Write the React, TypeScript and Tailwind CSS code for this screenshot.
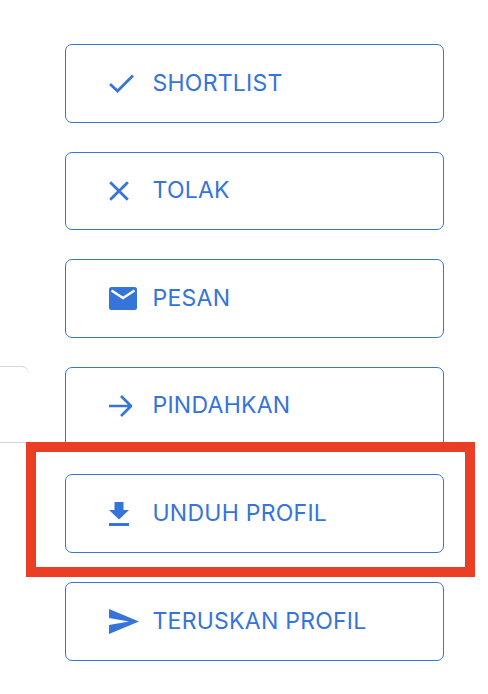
import { ReactNode } from "react";

const blue = "#3574d9";

const CheckIcon = () => (
  <svg width="25" height="19" viewBox="0 0 25 19" fill="none" stroke={blue} strokeWidth="2.7">
    <path d="M1 10 L8.5 17 L24 1.5" />
  </svg>
);

const CloseIcon = () => (
  <svg width="20" height="20" viewBox="0 0 20 20" fill="none" stroke={blue} strokeWidth="2.8">
    <path d="M1.2 1.2 L18.8 18.8 M18.8 1.2 L1.2 18.8" />
  </svg>
);

const MailIcon = () => (
  <svg width="28" height="23" viewBox="0 0 28 23">
    <rect width="28" height="23" rx="2.5" fill={blue} />
    <path d="M2.5 3.5 L14 11 L25.5 3.5" fill="none" stroke="#fff" strokeWidth="2.4" />
  </svg>
);

const ArrowIcon = () => (
  <svg width="23" height="22" viewBox="0 0 23 22" fill="none" stroke={blue} strokeWidth="2.7">
    <path d="M0 11 H21 M12 1 L22 11 L12 21" />
  </svg>
);

const DownloadIcon = () => (
  <svg width="20" height="24" viewBox="0 0 20 24" fill={blue}>
    <path d="M5.5 0 H14.5 V8 H20 L10 17.5 L0 8 H5.5 Z" />
    <rect y="21" width="20" height="3" />
  </svg>
);

const SendIcon = () => (
  <svg width="30" height="25" viewBox="0 0 30 25" fill={blue}>
    <path d="M0 0 L30 12.5 L0 25 L0 16 L20 12.5 L0 9 Z" />
  </svg>
);

const actions: { label: string; icon: ReactNode }[] = [
  { label: "SHORTLIST", icon: <CheckIcon /> },
  { label: "TOLAK", icon: <CloseIcon /> },
  { label: "PESAN", icon: <MailIcon /> },
  { label: "PINDAHKAN", icon: <ArrowIcon /> },
  { label: "UNDUH PROFIL", icon: <DownloadIcon /> },
  { label: "TERUSKAN PROFIL", icon: <SendIcon /> },
];

export default function App() {
  return (
    <div className="relative h-[694px] w-[488px] overflow-hidden bg-white font-['Inter',sans-serif]">
      <div className="flex flex-col gap-[29px] pl-[65px] pt-[44px]">
        {actions.map((action) => (
          <button
            key={action.label}
            className={
              action.label === "PINDAHKAN"
                ? "flex h-[78.6px] w-[379px] items-center rounded-t-[7px] border border-[#3574d9] bg-white pl-[42.5px]"
                : "flex h-[78.6px] w-[379px] items-center rounded-[7px] border border-[#3574d9] bg-white pl-[42.5px]"
            }
          >
            <span className="flex w-[44px] shrink-0">{action.icon}</span>
            <span className="pb-px text-[23px] font-normal tracking-[0.25px] text-[#3574d9]">{action.label}</span>
          </button>
        ))}
      </div>

      {/* piece of the card behind */}
      <div className="absolute left-[-10px] top-[366px] h-[77px] w-[39px] rounded-tr-lg border-t border-b border-[#d4d4d4]" />

      {/* highlight box */}
      <div className="absolute left-[26px] top-[442px] h-[135px] w-[449px] border-[10px] border-[#ea3f24]" />
    </div>
  );
}
